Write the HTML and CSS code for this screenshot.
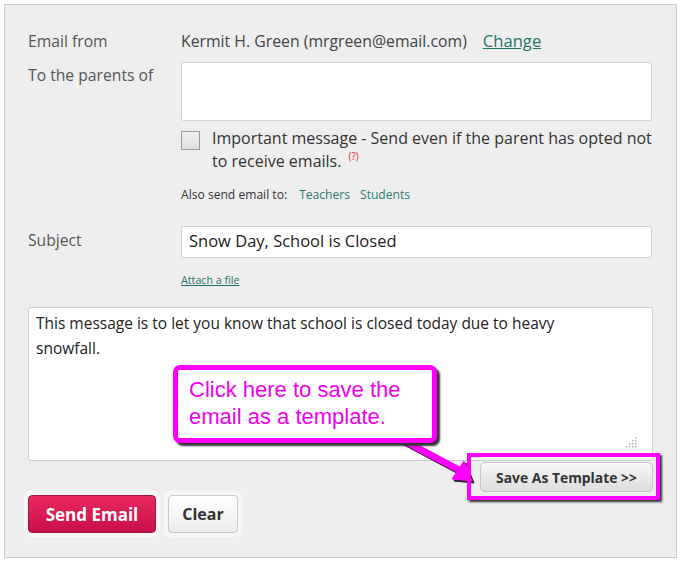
FILE: index.html
```html
<!DOCTYPE html>
<html>
<head>
<meta charset="utf-8">
<link rel="stylesheet" href="styles.css">
</head>
<body>
<div class="panel">
  <div class="row row-from">
    <div class="label">Email from</div>
    <div class="value">Kermit H. Green (mrgreen@email.com)<a class="change">Change</a></div>
  </div>
  <div class="row row-to">
    <div class="label label-top">To the parents of</div>
    <div class="field">
      <div class="box box-to"></div>
      <div class="important">
        <span class="checkbox"></span>
        <span class="important-text">Important message - Send even if the parent has opted not<br>to receive emails. <sup class="help">(?)</sup></span>
      </div>
      <div class="also">Also send email to:<a class="teal first">Teachers</a><a class="teal">Students</a></div>
    </div>
  </div>
  <div class="row row-subject">
    <div class="label">Subject</div>
    <div class="field">
      <div class="box box-subject">Snow Day, School is Closed</div>
      <a class="attach">Attach a file</a>
    </div>
  </div>
  <div class="box box-message">This message is to let you know that school is closed today due to heavy snowfall.
    <svg class="grip" width="12" height="12" viewBox="0 0 12 12">
      <g fill="#b5b5b5">
        <rect x="9" y="1" width="1.5" height="1.5"/>
        <rect x="6" y="4" width="1.5" height="1.5"/><rect x="9" y="4" width="1.5" height="1.5"/>
        <rect x="3" y="7" width="1.5" height="1.5"/><rect x="6" y="7" width="1.5" height="1.5"/><rect x="9" y="7" width="1.5" height="1.5"/>
        <rect x="0" y="10" width="1.5" height="1.5"/><rect x="3" y="10" width="1.5" height="1.5"/><rect x="6" y="10" width="1.5" height="1.5"/><rect x="9" y="10" width="1.5" height="1.5"/>
      </g>
    </svg>
  </div>
  <div class="template-row">
    <button class="btn-template">Save As Template &gt;&gt;</button>
  </div>
  <div class="actions">
    <span class="halo"><button class="btn-send">Send Email</button></span>
    <span class="halo"><button class="btn-clear">Clear</button></span>
  </div>

  <svg class="arrow" width="680" height="560" viewBox="0 0 680 560">
    <g transform="translate(2,2)" fill="#222" stroke="#222">
      <line x1="392" y1="432" x2="456" y2="466" stroke-width="7"/>
      <polygon points="467,476 447,474 459,456" stroke-width="1"/>
    </g>
    <g fill="#ff00ff" stroke="#ff00ff">
      <line x1="392" y1="432" x2="456" y2="466" stroke-width="7"/>
      <polygon points="467,476 447,474 459,456" stroke-width="1"/>
    </g>
  </svg>
  <div class="callout">Click here to save the email as a template.</div>
  <div class="highlight"></div>
</div>
</body>
</html>
```

FILE: styles.css
```css
html, body {
  margin: 0;
  padding: 0;
  background: #ffffff;
}

body {
  font-family: "Open Sans", "Lato", sans-serif;
}

.panel {
  position: relative;
  margin: 4px 4px 0 4px;
  width: 625px;
  height: 506px;
  padding: 26px 23px 20px 23px;
  border: 1px solid #cccccc;
  background: #eeeeee;
}

.row {
  display: grid;
  grid-template-columns: 153px 471px;
}

.label {
  font-size: 15.7px;
  line-height: 20px;
  color: #555555;
}

.label-top {
  padding-top: 3px;
}

.value {
  font-size: 15.8px;
  line-height: 20px;
  color: #444444;
}

.change {
  margin-left: 16px;
  color: #1f7467;
  text-decoration: underline;
  font-size: 16.6px;
}

.row-to {
  margin-top: 11px;
}

.box {
  background: #ffffff;
  border: 1px solid #cfcfcf;
  border-radius: 3px;
  box-sizing: border-box;
}

.box-to {
  height: 59px;
}

.important {
  display: flex;
  align-items: flex-start;
  margin-top: 6px;
}

.checkbox {
  flex: none;
  width: 17px;
  height: 17px;
  margin-top: 4px;
  border: 1px solid #9a9a9a;
  background: linear-gradient(#f2f2f2, #dedede);
}

.important-text {
  margin-left: 12px;
  font-size: 16px;
  line-height: 23px;
  color: #333333;
  white-space: nowrap;
}

.help {
  font-size: 10px;
  color: #e8242c;
  vertical-align: 7px;
  line-height: 0;
  margin-left: 3px;
}

.also {
  margin-top: 14px;
  font-size: 12.1px;
  line-height: 16px;
  color: #333333;
}

.teal {
  color: #2b7c70;
  margin-left: 10px;
}

.teal.first {
  margin-left: 12px;
}

.row-subject {
  margin-top: 23px;
}

.row-subject .label {
  padding-top: 4px;
}

.box-subject {
  height: 32px;
  padding: 3px 7px;
  font-size: 16.5px;
  line-height: 22px;
  color: #222222;
}

.attach {
  display: block;
  margin-top: 15px;
  font-size: 10.7px;
  line-height: 14px;
  color: #1f7467;
  text-decoration: underline;
}

.box-message {
  position: relative;
  margin-top: 20px;
  width: 625px;
  height: 154px;
  padding: 3px 30px 5px 7px;
  font-size: 15.5px;
  line-height: 25px;
  color: #222222;
}

.grip {
  position: absolute;
  right: 14px;
  bottom: 12px;
}

.template-row {
  display: flex;
  justify-content: flex-end;
  margin-top: 1px;
}

.btn-template {
  width: 173px;
  height: 30px;
  border: 1px solid #c4c4c4;
  border-radius: 5px;
  background: linear-gradient(#f7f7f7, #dedede);
  font-family: "Open Sans", sans-serif;
  font-weight: bold;
  font-size: 13.9px;
  color: #333333;
  padding: 0;
}

.actions {
  display: flex;
  gap: 4px;
  margin-top: -1px;
  margin-left: -4px;
}

.halo {
  display: block;
  padding: 4px;
  background: #f6f6f6;
  border-radius: 7px;
}

.btn-send {
  display: block;
  width: 128px;
  height: 38px;
  border: 1px solid #9e1840;
  border-radius: 4px;
  background: linear-gradient(#e92a5f, #c90e48);
  color: #ffffff;
  font-family: "Open Sans", sans-serif;
  font-weight: bold;
  font-size: 17px;
  padding: 0;
}

.btn-clear {
  display: block;
  width: 70px;
  height: 38px;
  border: 1px solid #c8c8c8;
  border-radius: 4px;
  background: linear-gradient(#ffffff, #ececec);
  color: #333333;
  font-family: "Open Sans", sans-serif;
  font-weight: bold;
  font-size: 16px;
  padding: 0;
}

.arrow {
  position: absolute;
  left: 0;
  top: 0;
  pointer-events: none;
}

.callout {
  position: absolute;
  left: 168px;
  top: 360px;
  width: 243px;
  height: 62px;
  padding: 6px 0 0 11px;
  border: 5px solid #ff00ff;
  border-radius: 7px;
  background: #ffffff;
  box-shadow: 3px 3px 2px #333333;
  font-family: "Liberation Sans", Arial, sans-serif;
  font-size: 22px;
  line-height: 27px;
  color: #f000f0;
}

.highlight {
  position: absolute;
  left: 462px;
  top: 448px;
  width: 185px;
  height: 39px;
  border: 4px solid #ff00ff;
  box-shadow: 2px 2px 2px #333333;
}
```
